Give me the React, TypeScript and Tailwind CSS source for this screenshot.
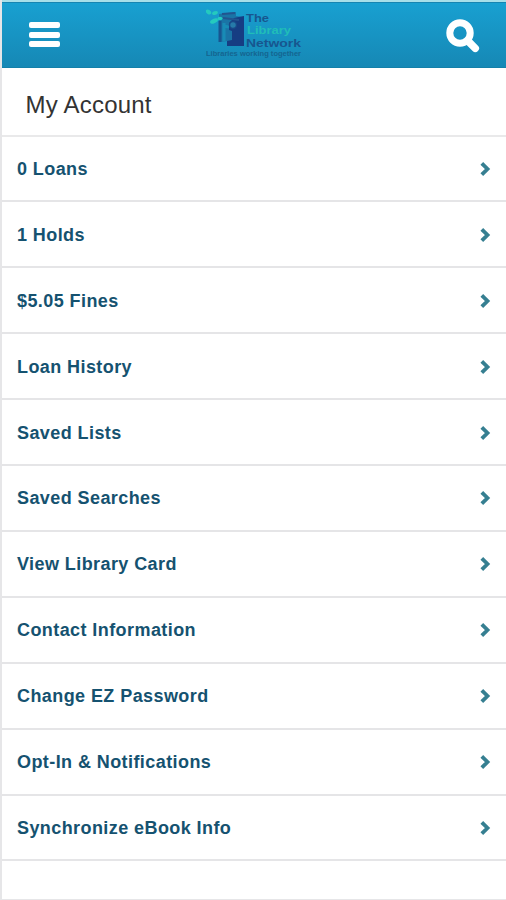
const items = [
  "0 Loans",
  "1 Holds",
  "$5.05 Fines",
  "Loan History",
  "Saved Lists",
  "Saved Searches",
  "View Library Card",
  "Contact Information",
  "Change EZ Password",
  "Opt-In & Notifications",
  "Synchronize eBook Info",
];

function Logo() {
  return (
    <svg width="100" height="60" viewBox="0 0 100 60" role="img" aria-label="The Library Network">
      {/* open book */}
      <path d="M13 11 L30 9 V13 L38 14 V43 L22 43 V38 L13 39Z" fill="#1a74a6" />
      <path d="M28 15 L38 13 V43 L21 43 V38 L26 37 V28 L23 27 V20Z" fill="#163d83" />
      <path d="M14 18 V39" stroke="#185590" strokeWidth="3" />
      <path d="M16 11 L29 10 M17 15 L33 17" stroke="#22548f" strokeWidth="2" />
      <path d="M17 23 L23 24 M18 20 V38" stroke="#188bb6" strokeWidth="3" />
      <circle cx="27" cy="22" r="3.5" fill="#267aa9" stroke="#184888" strokeWidth="1.5" />
      {/* leaves */}
      <g fill="#25cabe">
        <ellipse cx="2.5" cy="9" rx="3" ry="2" transform="rotate(35 2.5 9)" />
        <ellipse cx="9" cy="10" rx="3" ry="1.8" transform="rotate(-20 9 10)" />
        <ellipse cx="8" cy="18" rx="4.2" ry="2.2" transform="rotate(-25 8 18)" />
        <ellipse cx="14" cy="15.5" rx="2.5" ry="1.8" />
      </g>
      <g fontFamily="'Liberation Sans', Arial, sans-serif" fontWeight="700">
        <text x="40" y="18.5" fontSize="10.8" textLength="23" lengthAdjust="spacingAndGlyphs" fill="#17568f">The</text>
        <text x="41" y="31.2" fontSize="10.8" textLength="44" lengthAdjust="spacingAndGlyphs" fill="#20bdb8">Library</text>
        <text x="40" y="43.8" fontSize="10.8" textLength="55" lengthAdjust="spacingAndGlyphs" fill="#17568f">Network</text>
        <text x="0" y="53" fontSize="7" textLength="95" lengthAdjust="spacingAndGlyphs" fill="#156590">Libraries working together</text>
      </g>
    </svg>
  );
}

function Chevron() {
  return (
    <svg className="mt-px" width="14" height="18" viewBox="0 0 14 18" fill="none" aria-hidden="true">
      <path d="M2.8 3.3 L8.5 9 L2.8 14.7" stroke="#367f91" strokeWidth="3.8" />
    </svg>
  );
}

export default function App() {
  return (
    <div className="flex h-[900px] w-[506px] flex-col overflow-hidden border-b border-l-2 border-[#e6e6e8] bg-white font-['Liberation_Sans',Arial,sans-serif]">
      <div className="h-0.5 shrink-0 bg-[#a6dfe9]" />
      <header className="flex h-[66px] shrink-0 items-start justify-between border-y border-t-[#1585b2] border-b-[#1480a9] bg-linear-to-b from-[#18a0d1] to-[#1688b5] pr-[26px] pl-[27px]">
        <button aria-label="Menu" className="mt-[19px] flex w-[31px] flex-col gap-[3.5px]">
          <span className="h-[6px] w-full rounded-[2px] bg-white" />
          <span className="h-[6px] w-full rounded-[2px] bg-white" />
          <span className="h-[6px] w-full rounded-[2px] bg-white" />
        </button>
        <div className="ml-auto pr-[140px]">
          <Logo />
        </div>
        <button aria-label="Search" className="mt-4">
          <svg width="34" height="34" viewBox="0 0 34 34" fill="none" stroke="white">
            <circle cx="14" cy="14" r="10.2" strokeWidth="7" />
            <path d="M22 22 L29.3 29.3" strokeWidth="7.5" strokeLinecap="round" />
          </svg>
        </button>
      </header>

      <h1 className="flex h-[68.5px] shrink-0 items-center border-b-2 border-[#e9e9ea] pt-[7px] pl-[23.5px] text-2xl tracking-[0.22px] text-[#333]">
        My Account
      </h1>

      <ul className="shrink-0">
        {items.map((item) => (
          <li
            key={item}
            className="flex h-[65.92px] items-center justify-between border-b-2 border-[#e5e5e7] pr-[13px] pl-[15px]"
          >
            <span className="pt-px text-lg font-bold tracking-[0.42px] text-[#155270]">{item}</span>
            <Chevron />
          </li>
        ))}
      </ul>
    </div>
  );
}
